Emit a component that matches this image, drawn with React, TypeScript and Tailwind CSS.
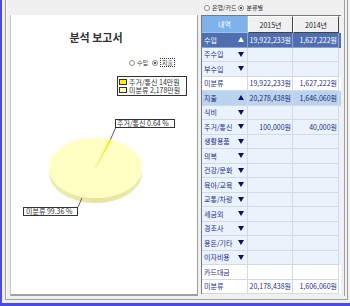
import React from "react";

type Row = {
  label: string;
  arrow?: "up" | "down";
  a?: string;
  b?: string;
  kind: "income" | "expense" | "cat" | "plain";
};

const ROWS: Row[] = [
  { label: "수입", arrow: "up", a: "19,922,233원", b: "1,627,222원", kind: "income" },
  { label: "주수입", arrow: "down", kind: "cat" },
  { label: "부수입", arrow: "down", kind: "cat" },
  { label: "미분류", a: "19,922,233원", b: "1,627,222원", kind: "plain" },
  { label: "지출", arrow: "up", a: "20,278,438원", b: "1,646,060원", kind: "expense" },
  { label: "식비", arrow: "down", kind: "cat" },
  { label: "주거/통신", arrow: "down", a: "100,000원", b: "40,000원", kind: "cat" },
  { label: "생활용품", arrow: "down", kind: "cat" },
  { label: "의복", arrow: "down", kind: "cat" },
  { label: "건강/문화", arrow: "down", kind: "cat" },
  { label: "육아/교육", arrow: "down", kind: "cat" },
  { label: "교통/차량", arrow: "down", kind: "cat" },
  { label: "세금외", arrow: "down", kind: "cat" },
  { label: "경조사", arrow: "down", kind: "cat" },
  { label: "용돈/기타", arrow: "down", kind: "cat" },
  { label: "이자비용", arrow: "down", kind: "cat" },
  { label: "카드대금", kind: "plain" },
  { label: "미분류", a: "20,178,438원", b: "1,606,060원", kind: "plain" },
];

const rowStyle: Record<Row["kind"], string> = {
  income: "bg-[#4f6fb0] text-white",
  expense: "bg-[#bad4f0] text-[#1c2a78]",
  cat: "bg-[#eaf2fc] text-[#23308a]",
  plain: "bg-white text-[#23308a]",
};

function Radio({ checked }: { checked?: boolean }) {
  return (
    <span className="flex h-[6px] w-[6px] shrink-0 items-center justify-center rounded-full border border-[#8a8a8a] bg-white">
      {checked && <span className="h-[2px] w-[2px] rounded-full bg-[#222]" />}
    </span>
  );
}

function Arrow({ dir, light }: { dir: "up" | "down"; light: boolean }) {
  const c = light ? "#ffffff" : "#101060";
  return (
    <svg width="6" height="5" viewBox="0 0 6 5">
      {dir === "up" ? (
        <polygon points="0,5 6,5 3,0" fill={c} />
      ) : (
        <polygon points="0,0 6,0 3,5" fill={c} />
      )}
    </svg>
  );
}

function PieChart() {
  const cx = 84.5;
  const cy = 72;
  const rx = 46.5;
  const ry = 30;
  const d = 5;
  const pt = (deg: number) => {
    const t = (deg * Math.PI) / 180;
    return [cx + rx * Math.cos(t), cy - ry * Math.sin(t)];
  };
  const [x1, y1] = pt(69.5);
  const [x2, y2] = pt(72);
  return (
    <div className="relative h-[130px] w-[185px]">
      <svg width="185" height="130" className="absolute left-0 top-0">
        <defs>
          <linearGradient id="side" x1="0" x2="1" y1="0" y2="0">
            <stop offset="0" stopColor="#eeeeb0" />
            <stop offset="0.5" stopColor="#e4e49a" />
            <stop offset="1" stopColor="#ececa8" />
          </linearGradient>
        </defs>
        <path
          d={`M ${cx - rx} ${cy} A ${rx} ${ry} 0 0 0 ${cx + rx} ${cy} L ${cx + rx} ${cy + d} A ${rx} ${ry} 0 0 1 ${cx - rx} ${cy + d} Z`}
          fill="url(#side)"
        />
        <ellipse cx={cx} cy={cy} rx={rx} ry={ry} fill="#ffffc3" />
        <line x1={cx} y1={cy} x2={x2} y2={y2} stroke="#d8d8a8" strokeWidth="0.6" />
        <path d={`M ${cx} ${cy} L ${x1} ${y1} A ${rx} ${ry} 0 0 0 ${x2} ${y2} Z`} fill="#f4f000" />
        <line x1="99.5" y1="43.5" x2="104.5" y2="32" stroke="#333" strokeWidth="0.8" />
        <line x1="71" y1="102" x2="67" y2="111" stroke="#333" strokeWidth="0.8" />
      </svg>
      <div className="absolute left-[104px] top-[23px] flex h-[9px] w-[60px] items-center border border-[#333] bg-white pl-[1px] text-[7px] leading-[7px] text-[#333]">
        주거/통신 0.64 %
      </div>
      <div className="absolute left-[12px] top-[111px] flex h-[9px] w-[55px] items-center border border-[#333] bg-white pl-[2px] text-[7px] leading-[7px] text-[#333]">
        미분류 99.36 %
      </div>
    </div>
  );
}

export default function App() {
  return (
    <div className="h-[306px] w-[350px] overflow-hidden border-b-[3px] border-l-2 border-[#4a4ae8] bg-[#f0f0f0] font-['Noto_Sans_CJK_KR','Noto_Sans',sans-serif]">
      <div className="ml-[3px] mr-[2px] flex h-[300px] border-b border-l border-r border-[#a0a0a0] pb-[3px] pl-[4px] shadow-[inset_1px_0_0_#fff]">
        {/* left: chart panel */}
        <div className="flex w-[188px] flex-col pt-[15px]">
          <div className="flex flex-1 flex-col border-b-2 border-l border-r border-b-[#a0a0a0] border-l-[#c8c8c8] border-r-[#a0a0a0] bg-white">
            <div className="flex h-[30px] w-[170px] items-end justify-center pb-[1px] text-[11px] font-bold leading-[13px] text-[#333]">
              분석 보고서
            </div>
            <div className="mt-[13px] flex h-[9px] items-center justify-end gap-[2px] pr-[22px] text-[6px] leading-[7px] text-[#333]">
              <Radio />
              <span className="mr-[2px]">수입</span>
              <Radio checked />
              <span className="border border-dotted border-[#333] px-[1px]">지출</span>
            </div>
            <div className="mr-[10px] mt-[9px] flex w-[70px] flex-col self-end border border-[#333] bg-white px-[1px] py-[1px] text-[7px] leading-[8px] text-[#333]">
              <div className="flex items-center gap-[2px] whitespace-nowrap">
                <span className="h-[6px] w-[8px] shrink-0 border border-[#333] bg-[#ffee00]" />
                주거/통신 14만원
              </div>
              <div className="flex items-center gap-[2px] whitespace-nowrap">
                <span className="h-[6px] w-[8px] shrink-0 border border-[#333] bg-[#ffffc0]" />
                미분류 2,178만원
              </div>
            </div>
            <PieChart />
          </div>
        </div>

        {/* right: table */}
        <div className="ml-[3px] flex w-[144px] flex-col border-r border-[#a0a0a0]">
          <div className="flex h-[15px] items-center gap-[2px] pl-[3px] text-[6px] leading-[7px] text-[#333]">
            <Radio />
            <span>은행/카드</span>
            <Radio checked />
            <span>분류별</span>
          </div>
          <div className="w-[140px] border-l border-t border-[#7a7a7a] text-[7px] leading-[8px]">
            <div className="grid h-[17px] grid-cols-[46px_45px_46px]">
              <div className="flex items-center justify-center border-b border-r border-[#9cc2ea] bg-[#7db3ea] text-white">
                내역
              </div>
              <div className="flex items-center justify-center border-b border-r border-l border-t border-b-[#444] border-l-white border-r-[#444] border-t-white bg-[#f0f0f0] text-[#222]">
                2015년
              </div>
              <div className="flex items-center justify-center border-b border-r border-l border-t border-b-[#444] border-l-white border-r-[#444] border-t-white bg-[#f0f0f0] text-[#222]">
                2014년
              </div>
            </div>
            {ROWS.map((r, i) => {
              const dark = r.kind === "income";
              const line = dark ? "border-[#8aa3d2]" : "border-[#d2dae6]";
              return (
                <div
                  key={i}
                  className={`grid h-[14.5px] grid-cols-[46px_45px_46px] ${rowStyle[r.kind]}`}
                >
                  <div className={`flex items-center justify-between border-b border-r pl-[2px] pr-[3px] ${line}`}>
                    <span>{r.label}</span>
                    {r.arrow && <Arrow dir={r.arrow} light={dark} />}
                  </div>
                  <div className={`flex items-center justify-end border-b border-r pr-[1px] ${line}`}>
                    {r.a}
                  </div>
                  <div className={`flex items-center justify-end border-b border-r pr-[1px] ${line}`}>
                    {r.b}
                  </div>
                </div>
              );
            })}
          </div>
        </div>
      </div>
    </div>
  );
}
